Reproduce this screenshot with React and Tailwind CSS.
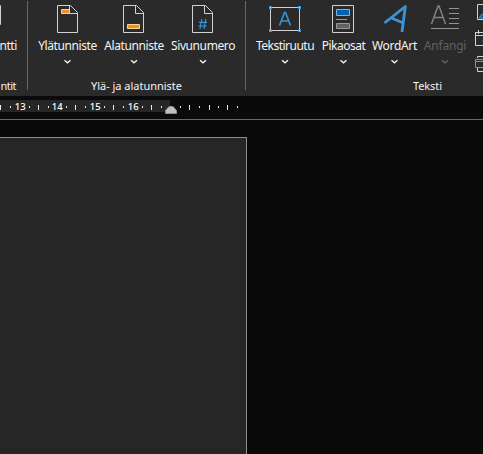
import React from "react";

function Button({ x, w, label, tracking, disabled, children }) {
  const cx = x + w / 2;
  return (
    <div className={`flex shrink-0 flex-col items-center ${disabled ? "text-[#606060]" : "text-[#f4f4f4]"}`} style={{ width: w }}>
      <svg className="block shrink-0" width={w} height="37" viewBox={`${x} 0 ${w} 37`} fill="none">
        {children}
      </svg>
      <span className={`h-[18px] whitespace-nowrap text-[12px] leading-[18px] ${tracking}`}>{label}</span>
      <svg className="mt-[3px] block" width="8" height="8" viewBox="0 0 8 8" fill="none" stroke="currentColor" strokeWidth="1.4">
        <path d={Number.isInteger(cx) ? "M1 2.3 4 4.8 7 2.3" : "M.5 2.3 3.5 4.8 6.5 2.3"} />
      </svg>
    </div>
  );
}

function Doc({ x, children }) {
  return (
    <g>
      <path d={`M${x + 0.5} 5.5H${x + 13.5}L${x + 20.5} 12.5V32.5H${x + 0.5}ZM${x + 12.5} 5.5V13.5H${x + 20.5}`} stroke="#d2d2d2" />
      {children}
    </g>
  );
}

function Ruler() {
  const numbers = [[20.3, "13"], [57.3, "14"], [95.3, "15"], [133.3, "16"]];
  const dots = [10, 29, 48, 66, 85, 104, 123, 142, 161, 180, 199, 218, 237];
  const ticks = [0, 38, 75, 113, 151, 189, 209, 227];
  return (
    <svg className="block h-[19px] w-[483px]" viewBox="0 100 483 19">
      <path d="M0 100H170V112H0Z" fill="#262626" />
      {dots.map((x) => <rect key={x} x={x} y="106" width="1" height="2" fill="#e8e8e8" />)}
      {ticks.map((x) => <rect key={x} x={x} y="105" width="1" height="5" fill="#f0f0f0" />)}
      {numbers.map(([x, n]) => (
        <text key={n} x={x} y="110" textAnchor="middle" fontSize="9.5" fontWeight="500" fill="#fff">{n}</text>
      ))}
      <path d="M165.5 113.5V110.5L169 106.5H173L176.5 110.5V113.5Z" fill="#c0c0c0" stroke="#8c8c8c" />
    </svg>
  );
}

export default function App() {
  return (
    <div className="h-[454px] w-[483px] overflow-hidden bg-[#0a0a0a] font-['Noto_Sans',sans-serif] text-[#f4f4f4]">
      <div className="flex h-[96px] overflow-hidden bg-[#2a2a2a]">
        <section className="flex w-[27px] shrink-0 flex-col items-end overflow-hidden">
          <svg className="block shrink-0" width="27" height="37" fill="none"><path d="M0 5.5H.5V24.5H0" stroke="#d2d2d2" /></svg>
          <span className="mr-[10px] h-[18px] whitespace-nowrap text-[12px] leading-[18px] tracking-[-0.4px]">ntti</span>
          <span className="mt-[23px] mr-[11px] whitespace-nowrap text-[11px] leading-4 tracking-[-0.5px]">ntit</span>
        </section>
        <div className="mt-px h-[89px] w-px shrink-0 bg-[#666]" />
        <section className="flex w-[217px] shrink-0 flex-col items-center">
          <div className="flex h-[78px]">
            <Button x={34} w={67} label="Ylätunniste" tracking="tracking-[-0.4px]">
              <Doc x={57}><path d="M61.5 9.5H69.5V13.5H61.5Z" fill="#e8912d" stroke="#f8d58c" /></Doc>
            </Button>
            <Button x={101} w={66} label="Alatunniste" tracking="tracking-[-0.4px]">
              <Doc x={123}><path d="M127.5 24.5H139.5V28.5H127.5Z" fill="#e8912d" stroke="#f8d58c" /></Doc>
            </Button>
            <Button x={167} w={72} label="Sivunumero" tracking="tracking-[-0.4px]">
              <Doc x={192}><path d="M201.8 19 200 29M205.8 19 204 29M199 22.3H207M198.5 26H206.5" stroke="#3995d8" strokeWidth="1.2" /></Doc>
            </Button>
          </div>
          <span className="text-[11px] leading-4 tracking-[-0.02px]">Ylä- ja alatunniste</span>
        </section>
        <div className="mt-px h-[89px] w-px shrink-0 bg-[#666]" />
        <section className="flex w-[237px] shrink-0 flex-col pl-[6px]">
          <div className="flex h-[78px]">
            <Button x={252} w={66} label="Tekstiruutu" tracking="tracking-[-0.5px]">
              <path d="M270.5 7.5H299.5V30.5H270.5Z" stroke="#d2d2d2" />
              <path d="M279.5 25.5 284.5 12.5H285.5L290.5 25.5M281.3 21H288.7" stroke="#3995d8" strokeWidth="1.6" />
              {[[269, 6], [298, 6], [269, 29], [298, 29]].map(([a, b]) => (
                <rect key={`${a}-${b}`} x={a + 0.5} y={b + 0.5} width="2" height="2" fill="#d8eaf6" stroke="#3995d8" />
              ))}
            </Button>
            <Button x={318} w={51} label="Pikaosat" tracking="tracking-[-0.5px]">
              <path d="M332.5 5.5H353.5V32.5H332.5Z" stroke="#d2d2d2" />
              <path d="M336.5 9.5H349.5V15.5H336.5Z" fill="#0063b1" stroke="#73b9e8" />
              <path d="M336 19.5H347" stroke="#a0a0a0" />
              <path d="M336.5 23.5H349.5V28.5H336.5Z" fill="#626262" stroke="#999" />
            </Button>
            <Button x={369} w={51} label="WordArt" tracking="tracking-[-0.3px]">
              <path d="M384.5 23 405.3 6.5 402 32M390.5 17.5 403.2 23" stroke="#3995d8" strokeWidth="2.8" strokeLinejoin="round" />
            </Button>
            <Button x={420} w={50} label="Anfangi" tracking="tracking-[-0.2px]" disabled>
              <path d="M431.5 24 438 6H439L445.5 24M434 17.5H443" stroke="#858585" strokeWidth="1.4" />
              <path d="M449 8.5H459M449 13.5H459M449 18.5H459M449 23.5H459M431 28.5H459" stroke="#949494" />
            </Button>
            <svg className="block shrink-0" width="13" height="78" viewBox="470 0 13 78" fill="none">
              <path d="M484 4.5H477.5V19.5H484" stroke="#d2d2d2" />
              <path d="M479 18 482 14 484 15V18Z" fill="#0063b1" stroke="#3995d8" />
              <path d="M475.5 32.5H483M478.5 30V34M483 45.5H475.5V32M475 35.5H483" stroke="#d2d2d2" />
              <path d="M484 38A4 4 0 0 0 484 44Z" fill="#3995d8" />
              <path d="M477.5 58V56.5H484M477.5 68V71.5H484" stroke="#d2d2d2" />
              <path d="M484 59.5H475.5V67.5H484M475 61.5H484" stroke="#4ba3e0" />
            </svg>
          </div>
          <span className="pl-[161px] text-[11px] leading-4 tracking-[-0.1px]">Teksti</span>
        </section>
      </div>
      <div className="h-[23px] pt-1"><Ruler /></div>
      <div className="h-px bg-[#6a6a6a]" />
      <main className="h-[334px] pt-[17px]">
        <div className="h-[317px] w-[247px] border-t border-r border-[#8c8c8c] bg-[#262626]" />
      </main>
    </div>
  );
}
